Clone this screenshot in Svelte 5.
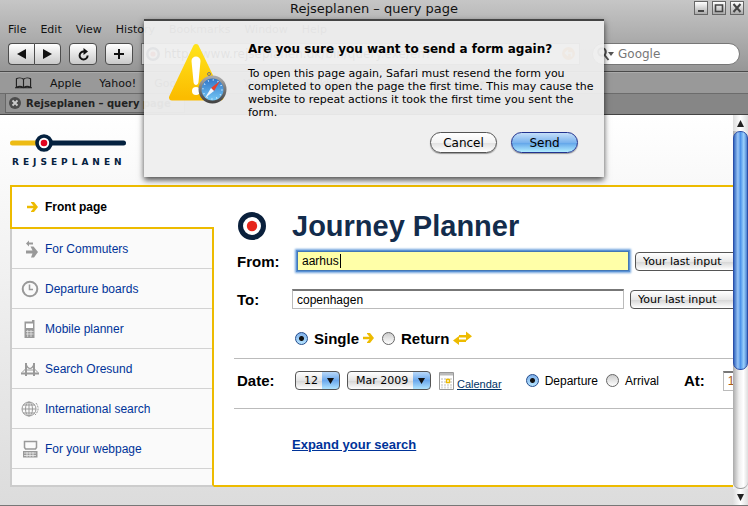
<script>
  const menus = ['File', 'Edit', 'View', 'History', 'Bookmarks', 'Window', 'Help'];
  const bookmarks = ['Apple', 'Yahoo!', 'Google Maps', 'YouTube', 'Wikipedia', 'News ▾', 'Popular ▾'];
  const links = [
    { icon: 'commute', label: 'For Commuters' },
    { icon: 'clock', label: 'Departure boards' },
    { icon: 'phone', label: 'Mobile planner' },
    { icon: 'bridge', label: 'Search Oresund' },
    { icon: 'globe', label: 'International search' },
    { icon: 'laptop', label: 'For your webpage' }
  ];
  let from = $state('aarhus');
  let to = $state('copenhagen');
  let trip = $state('single');
  let mode = $state('departure');
</script>

{#snippet arrow()}
  <svg class="arrow" width="11" height="10" viewBox="0 0 11 10"><path d="M0 3.8h6.500L4 .8V0h3L11 5 7 10H4v-.8L6.500 6.200H0z" fill="#edbb00" /></svg>
{/snippet}

{#snippet target(size)}
  <svg width={size} height={size} viewBox="0 0 28 28"><circle cx="14" cy="14" r="11.500" fill="#fff" stroke="#0a203c" stroke-width="5" /><circle cx="14" cy="14" r="5.200" fill="#e6271d" /></svg>
{/snippet}

<div class="window">
  <header class="chrome">
    <div class="titlebar">
      <span class="title">Rejseplanen – query page</span>
      <div class="winbtns">
        <button aria-label="Minimize"><svg width="12" height="12" viewBox="0 0 12 12"><path d="M3 9h6" stroke="#444" stroke-width="2" /></svg></button>
        <button aria-label="Maximize"><svg width="12" height="12" viewBox="0 0 12 12"><path d="M2.500 3h7v6.500h-7z" fill="none" stroke="#444" stroke-width="1.600" /></svg></button>
        <button aria-label="Close"><svg width="12" height="12" viewBox="0 0 12 12"><path d="M2.500 2l7 8M9.500 2l-7 8" stroke="#444" stroke-width="2" /></svg></button>
      </div>
    </div>
    <nav class="menubar">
      {#each menus as m}<span>{m}</span>{/each}
    </nav>
    <div class="toolbar">
      <div class="pair">
        <button class="tool" aria-label="Back"><svg width="9" height="10" viewBox="0 0 9 10"><path d="M9 0v10L0 5z" fill="#111" /></svg></button>
        <button class="tool" aria-label="Forward"><svg width="9" height="10" viewBox="0 0 9 10"><path d="M0 0v10l9-5z" fill="#111" /></svg></button>
      </div>
      <button class="tool single" aria-label="Reload"><svg width="13" height="13" viewBox="0 0 13 13"><path d="M7 3.500A4 4 0 1 0 10.600 7.500" fill="none" stroke="#111" stroke-width="2" /><path d="M6.500 0L11 3.500 6.500 7z" fill="#111" /></svg></button>
      <button class="tool single" aria-label="Add bookmark"><svg width="12" height="12" viewBox="0 0 12 12"><path d="M6 1v10M1 6h10" stroke="#111" stroke-width="2" /></svg></button>
      <div class="address">
        {@render target(14)}
        <input aria-label="Address" value="http://www.rejseplanen.dk/bin/query.exe/en?" />
        <svg width="13" height="13" viewBox="0 0 13 13"><circle cx="6.500" cy="6.500" r="6.500" fill="#f08a24" /><path d="M9.500 9.500V6h-6M6 3.500L3.500 6 6 8.500" fill="none" stroke="#fff" stroke-width="1.500" /></svg>
      </div>
      <div class="search">
        <svg width="17" height="14" viewBox="0 0 17 14"><circle cx="5" cy="5" r="3.800" fill="none" stroke="#555" stroke-width="2" /><path d="M7.500 8l4 5" stroke="#555" stroke-width="2" /><path d="M11 5h6l-3 4z" fill="#555" /></svg>
        <input aria-label="Search" placeholder="Google" />
      </div>
    </div>
    <nav class="bookmarks">
      <svg class="book" width="17" height="12" viewBox="0 0 18 12"><path d="M9 2C7 .3 3.500.3 1.500 1.500V10.500C3.500 9.500 7 9.500 9 11c2-1.500 5.500-1.500 7.500-.5V1.500C14.500.3 11 .3 9 2zV11M0 11h18" fill="none" stroke="#222" stroke-width="1.200" /></svg>
      {#each bookmarks as b}<span>{b}</span>{/each}
    </nav>
    <div class="tabs">
      <div class="tab">
        <svg width="12" height="12" viewBox="0 0 12 12"><circle cx="6" cy="6" r="6" fill="#4c4c4c" /><path d="M3.500 3.500l5 5M8.500 3.500l-5 5" stroke="#ccc" stroke-width="1.800" /></svg>
        <span>Rejseplanen – query page</span>
      </div>
    </div>
  </header>

  <div class="viewport">
    <div class="page">
      <div class="logo">
        <svg width="116" height="18" viewBox="0 0 116 18"><path d="M2.500 9H30" stroke="#edbb14" stroke-width="5" stroke-linecap="round" /><path d="M38 9h75.500" stroke="#04213f" stroke-width="5" stroke-linecap="round" /><circle cx="34" cy="9" r="7" fill="#fff" stroke="#04213f" stroke-width="3.600" /><circle cx="34" cy="9" r="3.300" fill="#e30520" /></svg>
        <span>REJSEPLANEN</span>
      </div>

      <div class="frame">
        <aside>
          <a class="front" href="#front">{@render arrow()}Front page</a>
          <div class="list">
            {#each links as l}
              <a href="#{l.icon}">
                <svg width="18" height="20" viewBox="0 0 18 20" fill="none" stroke="#999">
                  {#if l.icon === 'commute'}
                    <path d="M5 4.500L8 1.500V3.500h4v2H8v2z" fill="#999" stroke="none" /><path d="M5 11.500h6.500L9.500 7.500h3L17 13 13 18.500h-3l1.500-4H5z" fill="#999" stroke="none" />
                  {:else if l.icon === 'clock'}
                    <circle cx="9" cy="10" r="7.300" stroke-width="2" /><path d="M8.500 5.500v5H12" stroke-width="1.500" />
                  {:else if l.icon === 'phone'}
                    <path d="M3.500 2.500H11V1h2.500v18h-10z" fill="#999" stroke="none" /><path d="M5 4.500h7v4.500H5z" fill="#fff" stroke="none" /><path d="M5 12.500h7.500M5 15h7.500M6.700 11v7M10 11v7" stroke="#eee" stroke-width=".7" />
                  {:else if l.icon === 'bridge'}
                    <path d="M5 4v13M13 4v13" stroke-width="2" /><path d="M5 5c2 6 6 6 8 0M5 11h8" stroke-width="1.200" /><path d="M0 14.500h18" stroke-width="2" /><path d="M1 13.500l4-4M17 13.500l-4-4" />
                  {:else if l.icon === 'globe'}
                    <circle cx="8" cy="10" r="7" /><ellipse cx="8" cy="10" rx="3.500" ry="7" /><path d="M8 3v14M1 10h14M2 6h12M2 14h12" /><path d="M15 4c3 4 3 8-1 12" stroke-dasharray="2 1" />
                  {:else}
                    <path d="M3.500 2.500h12v6l-1 1.500h-10l-1-1.500z" stroke-width="1.500" /><path d="M2 12h14.500v6.500H2z" fill="#999" stroke="none" /><path d="M3 14h12M3 16.500h12M6 13v5M9 13v5M12 13v5" stroke="#eee" stroke-width=".8" />
                  {/if}
                </svg>
                {l.label}
              </a>
            {/each}
          </div>
        </aside>

        <form class="planner" onsubmit={(e) => e.preventDefault()}>
          <div class="heading">{@render target(28)}<h1>Journey Planner</h1></div>

          <div class="row from">
            <label class="name" for="from">From:</label>
            <div class="focus"><input id="from" bind:value={from} /><i class="caret"></i></div>
            <select class="last" aria-label="Your last input, from"><option>Your last input</option></select>
          </div>
          <div class="row to">
            <label class="name" for="to">To:</label>
            <input id="to" bind:value={to} />
            <select class="last" aria-label="Your last input, to"><option>Your last input</option></select>
          </div>
          <div class="row trip">
            <label><input type="radio" value="single" bind:group={trip} />Single</label>
            {@render arrow()}
            <label><input type="radio" value="return" bind:group={trip} />Return</label>
            <svg width="19" height="14" viewBox="0 0 19 14"><path d="M6 4h7V.5L19 5.200 13 10V6.500H6zM13 8.500H6V5L0 9.500 6 14V11h7z" fill="#edbb00" /></svg>
          </div>

          <div class="row date">
            <label class="name" for="day">Date:</label>
            <select id="day" class="pop day"><option>12</option></select>
            <select class="pop month" aria-label="Month"><option>Mar 2009</option></select>
            <a class="cal" href="#calendar">
              <svg width="15" height="18" viewBox="0 0 15 18"><path d="M.5.5h14v17H.5z" fill="#fff" stroke="#999" /><path d="M1 1h13v2.500H1z" fill="#bbb" /><path d="M2 7h11M2 10h11M2 13h11M2 15.500h11" stroke="#ddd" stroke-width="2" stroke-dasharray="2 1" /><path d="M7.500 7.500h3v3h-3z" fill="#fff" stroke="#edbb00" stroke-width="1.300" /></svg>
              <span>Calendar</span>
            </a>
            <label class="opt first"><input type="radio" value="departure" bind:group={mode} />Departure</label>
            <label class="opt"><input type="radio" value="arrival" bind:group={mode} />Arrival</label>
            <label class="at" for="time">At:</label>
            <input id="time" value="10:00" />
          </div>
          <a class="expand" href="#expand">Expand your search</a>
        </form>
      </div>
    </div>

    <div class="scroll">
      <button aria-label="Scroll up"><svg width="7" height="7" viewBox="0 0 7 7"><path d="M0 7h7L3.500 0z" fill="#222" /></svg></button>
      <div class="track"><div class="thumb"></div></div>
      <button aria-label="Scroll down"><svg width="7" height="7" viewBox="0 0 7 7"><path d="M0 0h7L3.500 7z" fill="#222" /></svg></button>
    </div>
  </div>

  <div class="sheet" role="dialog" aria-labelledby="ask">
    <svg class="warn" width="60" height="62" viewBox="0 0 60 62">
      <defs>
        <linearGradient id="y" x2="0" y2="1"><stop offset="0" stop-color="#ffe21a" /><stop offset="1" stop-color="#fbbc00" /></linearGradient>
        <linearGradient id="b" x2="0" y2="1"><stop offset="0" stop-color="#2a6ec4" /><stop offset="1" stop-color="#79cdf8" /></linearGradient>
        <linearGradient id="s" x2="0" y2="1"><stop offset="0" stop-color="#aaa" /><stop offset="1" stop-color="#444" /></linearGradient>
      </defs>
      <path d="M29 5L53.500 55.500H5z" fill="url(#y)" stroke="url(#y)" stroke-width="6" stroke-linejoin="round" />
      <path d="M24.500 19c0-6 9-6 9 0l-2 21c-.3 4-4.700 4-5 0z" fill="#fff" /><circle cx="29" cy="49" r="4" fill="#fff" />
      <circle cx="45.500" cy="47.500" r="12.500" fill="url(#b)" stroke="url(#s)" stroke-width="3" />
      <circle cx="45.500" cy="47.500" r="9.500" fill="none" stroke="#d5ecff" stroke-width="1.500" stroke-dasharray="1 3.970" />
      <path d="M53 39l-9 7 3 3z" fill="#e8402c" /><path d="M38 56l9-7-3-3z" fill="#eef6ff" />
      <circle cx="42" cy="32" r="1.500" fill="none" stroke="#777" />
    </svg>
    <div class="msg">
      <h2 id="ask">Are you sure you want to send a form again?</h2>
      <p>To open this page again, Safari must resend the form you completed to open the page the first time. This may cause the website to repeat actions it took the first time you sent the form.</p>
      <div class="actions"><button>Cancel</button><button class="default">Send</button></div>
    </div>
  </div>
</div>

<style>
  .window { position: relative; min-height: 100vh; display: flex; flex-direction: column; overflow: hidden; font: 11px "DejaVu Sans", sans-serif; color: #111; background: #777; }
  .window *, .window { box-sizing: border-box; }
  button, input, select { font: inherit; margin: 0; padding: 0; border: 0; background: none; color: inherit; appearance: none; }
  svg { flex: none; }

  .chrome { background: linear-gradient(#c6c6c6, #969696 71px); border-bottom: 1px solid #444; white-space: nowrap; }
  .titlebar { height: 18px; display: flex; align-items: center; justify-content: center; position: relative; }
  .title { font-size: 13px; line-height: 16px; }
  .winbtns { position: absolute; right: 4px; top: 1px; display: flex; gap: 4px; }
  .winbtns button { width: 14px; height: 14px; border: 1px solid #666; background: linear-gradient(#fff, #aaa); display: flex; align-items: center; justify-content: center; }
  .menubar { height: 22px; display: flex; align-items: center; gap: 14px; padding: 0 8px; }
  .toolbar { height: 32px; display: flex; align-items: center; padding: 0 8px 4px; border-bottom: 1px solid #4a4a4a; }
  .pair { display: flex; margin-top: 1px; }
  .tool { width: 27px; height: 22px; border: 1px solid #4d4d4d; border-radius: 4px; background: linear-gradient(#fff, #c9c9c9); display: flex; align-items: center; justify-content: center; }
  .pair .tool { width: 26px; }
  .pair .tool:first-child { border-radius: 4px 0 0 4px; border-right: 0; }
  .pair .tool:last-child { border-radius: 0 4px 4px 0; width: 27px; }
  .single { width: 28px; margin: 1px 0 0 8px; }
  .address { flex: 1; display: flex; align-items: center; gap: 4px; height: 22px; margin: 0 12px 0 8px; padding: 0 4px; background: #fff; border: 1px solid #777; }
  .address input { flex: 1; font-size: 12px; }
  .search { width: 148px; height: 22px; margin: 1px 0 0; display: flex; align-items: center; gap: 4px; padding: 0 4px; background: #fff; border: 1px solid #777; border-radius: 11px; }
  .search input { width: 100px; font-size: 12px; }
  .search input::placeholder { color: #777; opacity: 1; }
  .bookmarks { height: 21px; display: flex; align-items: center; gap: 18px; padding: 0 15px; background: #999; border-top: 1px solid #aaa; }
  .tabs { height: 21px; background: #868686; border-top: 1px solid #6c6c6c; padding-left: 5px; display: flex; }
  .tab { display: flex; align-items: center; gap: 5px; width: 180px; padding: 0 3px; background: #959595; border: 1px solid #666; border-top: 0; height: 19px; font-weight: bold; font-size: 10px; color: #222; }

  .viewport { flex: 1; display: flex; margin-bottom: 1px; }
  .page { flex: 1; min-width: 0; padding: 19px 0 18px 10px; background: linear-gradient(#fff, #dcdcdc); font-family: "Liberation Sans", Arial, sans-serif; }
  .logo { height: 51px; color: #04213f; }
  .logo svg { display: block; }
  .logo span { display: block; padding: 4px 0 0 2px; font: bold 9px/12px "DejaVu Sans", sans-serif; letter-spacing: 4px; }

  .frame { display: flex; }
  aside { width: 204px; flex: none; display: flex; flex-direction: column; font-size: 12px; }
  aside a { display: flex; align-items: center; color: #003399; text-decoration: none; }
  .front { height: 44px; border: 2px solid #edbb00; border-right: 0; background: #fff; padding-left: 15px; gap: 7px; }
  aside .front { color: #000; font-weight: bold; }
  .list { flex: 1; border: 2px solid #ccc; border-top: 0; border-right-color: #edbb00; background: #fafafa; padding-bottom: 16px; }
  .list a { height: 40px; border-bottom: 1px solid #d2d2d2; padding-left: 9px; gap: 6px; }

  .planner { flex: 1; min-width: 0; height: 302px; overflow: hidden; background: #fff; border: solid #edbb00; border-width: 2px 0; padding: 23px 0 0 20px; color: #000; }
  .heading { display: flex; align-items: center; gap: 26px; padding-left: 4px; height: 32px; }
  h1 { margin: 0; font-size: 29px; line-height: 32px; color: #132c4c; }
  .row { display: flex; align-items: center; font-size: 15px; white-space: nowrap; }
  .row > * { flex: none; }
  .name { width: 55px; font-weight: bold; }
  .from, .to { height: 38px; padding-left: 3px; }
  .focus { position: relative; margin-left: 5px; }
  #from, #to { display: block; width: 332px; height: 20px; padding: 0 4px; font-size: 12px; border: 1px solid #bbb; border-top: 2px solid #777; background: #fff; }
  #from { background: #ffffa8; border: 1px solid #4377b4; box-shadow: 0 0 0 1px #5b93d6, 0 0 2px 2px #6fa2dc; }
  .caret { position: absolute; left: 43px; top: 3px; width: 1px; height: 14px; background: #000; }
  .last { width: 140px; height: 19px; padding: 0 7px; font: 11px "DejaVu Sans", sans-serif; border: 1px solid #555; border-radius: 4px; background: linear-gradient(#fff, #e8e8e8 50%, #d4d4d4 51%, #fff); margin-left: 6px; }
  .trip { height: 40px; padding-left: 61px; gap: 4px; font-weight: bold; }
  .trip label { display: flex; align-items: center; gap: 6px; }
  .trip label + svg + label { margin-left: 4px; }
  input[type='radio'] { width: 13px; height: 13px; border-radius: 50%; border: 1px solid #666; background: linear-gradient(#ccc, #fff); }
  input[type='radio']:checked { border-color: #224b8c; background: radial-gradient(circle, #111 2px, transparent 3px), linear-gradient(#7fb0ea, #b5e4ff); }
  .date { height: 51px; padding: 0 0 6px 3px; border: solid #bbb; border-width: 1px 0; }
  .pop { height: 19px; padding: 0 8px; font: 11px "DejaVu Sans", sans-serif; border: 1px solid #555; border-radius: 4px; margin-left: 3px; background: url("data:image/svg+xml,%3Csvg xmlns='http://www.w3.org/2000/svg' width='17' height='17'%3E%3Cdefs%3E%3ClinearGradient id='g' x2='0' y2='1'%3E%3Cstop stop-color='%23b9d9fa'/%3E%3Cstop offset='.5' stop-color='%236ba8ec'/%3E%3Cstop offset='1' stop-color='%23b0e4ff'/%3E%3C/linearGradient%3E%3C/defs%3E%3Cpath fill='url(%23g)' d='M0 0h17v17H0z'/%3E%3Cpath d='M5 6h7l-3.500 6z' fill='%23111'/%3E%3C/svg%3E") no-repeat right, linear-gradient(#fff, #e4e4e4 50%, #d4d4d4 51%, #fff); }
  .day { width: 45px; }
  .month { width: 84px; margin-left: 7px; }
  .cal { display: flex; align-items: flex-end; gap: 3px; margin-left: 8px; font-size: 11px; line-height: 12px; color: #003366; height: 18px; }
  .opt { display: flex; align-items: center; gap: 6px; font-size: 12px; margin-left: 8px; }
  .first { margin-left: 24px; }
  .at { margin-left: 25px; font-weight: bold; }
  #time { width: 50px; height: 20px; margin-left: 18px; padding-left: 4px; font-size: 12px; color: #a75a16; border: 1px solid #bbb; border-top: 2px solid #777; }
  .expand { display: inline-block; margin: 28px 0 0 58px; font-size: 13px; font-weight: bold; color: #003399; }

  .scroll { width: 15px; display: flex; flex-direction: column; background: #eee; }
  .scroll button { height: 16px; display: flex; align-items: center; justify-content: center; background: linear-gradient(90deg, #ddd, #fff, #ddd); }
  .track { flex: 1; background: linear-gradient(90deg, #aaa, #eee 40%, #fff 70%, #ddd); border-radius: 0 0 7px 7px; border-bottom: 1px solid #999; }
  .thumb { height: 67%; border-radius: 7px; border: 1px solid #2c4fa8; background: linear-gradient(90deg, #3468c0, #9bc6f6 30%, #4e94ea 50%, #9bd0fb 75%, #4a7fd0); }

  .sheet { position: absolute; top: 19px; left: 0; right: 0; margin: 0 auto; width: 460px; height: 158px; border-top: 2px solid #444; background: rgba(238, 238, 238, 0.95); box-shadow: 0 3px 6px rgba(0, 0, 0, 0.7); display: flex; padding: 21px 6px 0 23px; gap: 21px; color: #000; }
  .msg { flex: 1; display: flex; flex-direction: column; }
  h2 { margin: 0; font-size: 12px; line-height: 14px; }
  .msg p { margin: 11px 0 0; font-size: 11px; line-height: 13px; }
  .actions { display: flex; justify-content: flex-end; gap: 14px; margin: 13px 20px 0; }
  .actions button { width: 67px; height: 21px; font-size: 12px; border: 1px solid #555; border-radius: 11px; background: linear-gradient(#fff, #f3f3f3 50%, #e0e0e0 51%, #fff); box-shadow: 0 1px 1px #999; }
  .actions .default { border-color: #22338f; background: linear-gradient(#c5dff9, #7ab3ee 50%, #5fa2e8 51%, #b2edff); }
</style>
